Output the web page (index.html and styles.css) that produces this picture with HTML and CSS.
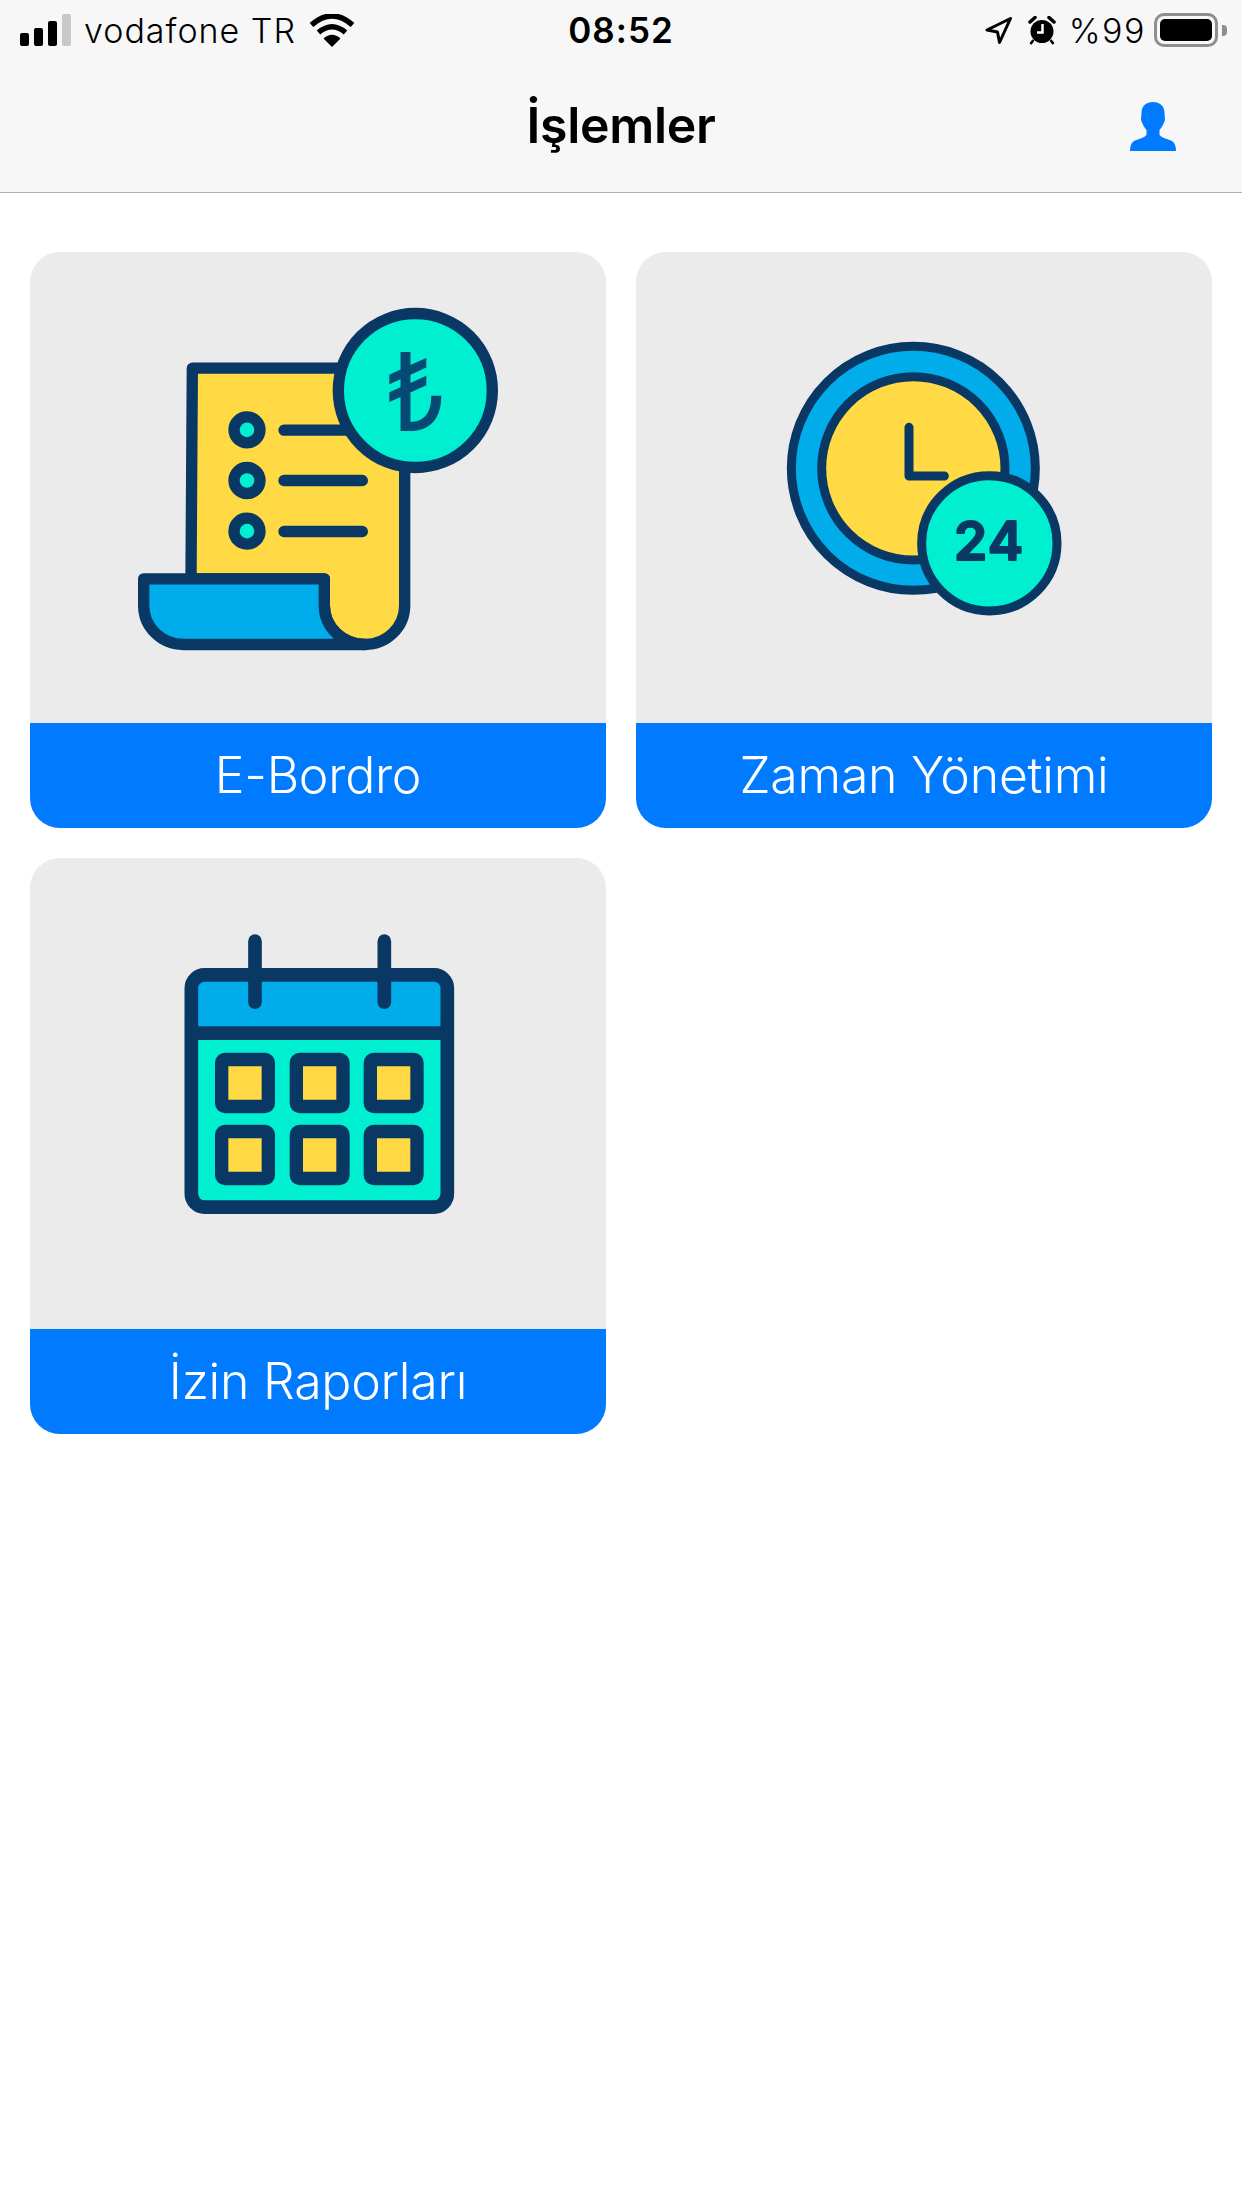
FILE: index.html
```html
<!DOCTYPE html>
<html lang="tr">

<head>
  <meta charset="UTF-8">
  <meta name="viewport" content="width=device-width, initial-scale=1.0">
  <title>İşlemler</title>
  <link rel="stylesheet" href="styles.css">
</head>

<body>

  <header class="top-bar">
    <div class="status-bar">
      <div class="status-left">
        <div class="signal">
          <span class="bar bar-1"></span>
          <span class="bar bar-2"></span>
          <span class="bar bar-3"></span>
          <span class="bar bar-4"></span>
        </div>
        <span class="carrier">vodafone TR</span>
        <svg class="wifi" width="46" height="33" viewBox="0 0 46 33">
          <path d="M2.5 11Q23-7 43.5 11" fill="none" stroke="#000" stroke-width="5.5" />
          <path d="M9.5 18.500Q23 7 36.500 18.500" fill="none" stroke="#000" stroke-width="5.500" />
          <path d="M23 33L14.500 24.500Q23 17 31.500 24.500Z" fill="#000" />
        </svg>
      </div>
      <span class="time">08:52</span>
      <div class="status-right">
        <svg class="location" width="27" height="27" viewBox="0 0 27 27">
          <path d="M25.500 1.500L2 13L12.500 15L14.500 25.500Z" fill="none" stroke="#000" stroke-width="3" stroke-linejoin="round" />
        </svg>
        <svg class="alarm" width="28" height="29" viewBox="0 0 28 29">
          <circle cx="14" cy="15.500" r="11.500" fill="#000" />
          <path d="M14.500 8V16.500H9" fill="none" stroke="#fff" stroke-width="2.500" />
          <path d="M2 6L7 1.500M26 6L21 1.500" stroke="#000" stroke-width="3.500" stroke-linecap="round" />
          <path d="M5.500 24L2.500 28M22.500 24L25.500 28" stroke="#000" stroke-width="2.500" />
        </svg>
        <span class="battery-text">%99</span>
        <div class="battery">
          <div class="battery-level"></div>
        </div>
        <span class="battery-nub"></span>
      </div>
    </div>

    <nav class="nav-bar">
      <span></span>
      <h1>İşlemler</h1>
      <svg class="profile" width="46" height="49" viewBox="0 0 46 49">
        <path d="M23 0C30 0 34.500 4 34.500 11C34.500 14 35.500 17 34.500 19.500C33 23 31.500 26 29.500 28V33C32 36 38 37 42 39C45 41 46 45 46 49H0C0 45 1 41 4 39C8 37 14 36 16.500 33V28C14.500 26 13 23 11.500 19.500C10.500 17 11.500 14 11.500 11C11.500 4 16 0 23 0Z" fill="#007aff" />
      </svg>
    </nav>
  </header>

  <main class="menu-grid">

    <a class="menu-card">
      <div class="menu-icon">
        <svg width="420" height="420" viewBox="0 0 420 420">
          <g transform="translate(2 2.500) scale(.33333)" stroke="#083863" stroke-width="34" stroke-linejoin="round" stroke-linecap="round">
            <path d="M247 263L243 895H643V975A122 117 0 0 0 765 1092A119 117 0 0 0 884 975V263Z" fill="#ffda44" />
            <path d="M101 895H643V975A122 117 0 0 0 765 1092H220A119 117 0 0 1 101 975Z" fill="#00acea" />
            <circle cx="411" cy="448" r="39" fill="#00efd1" />
            <circle cx="411" cy="600" r="39" fill="#00efd1" />
            <circle cx="411" cy="752" r="39" fill="#00efd1" />
            <path d="M522 449H740M522 600H757M522 753H757" fill="none" />
            <circle cx="916" cy="330" r="231" fill="#00efd1" />
            <text class="lira" x="918" y="450" text-anchor="middle" stroke="none">₺</text>
          </g>
        </svg>
      </div>
      <div class="menu-label">E-Bordro</div>
    </a>

    <a class="menu-card">
      <div class="menu-icon">
        <svg width="420" height="420" viewBox="0 0 420 420">
          <g transform="translate(36 32) scale(.33333)" stroke="#083863" stroke-width="27" stroke-linejoin="round" stroke-linecap="round">
            <circle cx="490" cy="475" r="366" fill="#00acea" />
            <circle cx="490" cy="475" r="275" fill="#ffda44" />
            <path d="M477 352V498H583" fill="none" />
            <circle cx="718" cy="700" r="203" fill="#00efd1" />
            <text class="hours" x="718" y="750" text-anchor="middle" stroke-width="6">24</text>
          </g>
        </svg>
      </div>
      <div class="menu-label">Zaman Yönetimi</div>
    </a>

    <a class="menu-card">
      <div class="menu-icon">
        <svg width="420" height="420" viewBox="0 0 420 420">
          <g transform="translate(52 26.500) scale(.33333)" stroke="#083863" stroke-width="41" stroke-linejoin="round" stroke-linecap="round">
            <rect x="94" y="193" width="768" height="697" rx="40" fill="#00efd1" stroke="none" />
            <path d="M94 368V233A40 40 0 0 1 134 193H822A40 40 0 0 1 862 233V368Z" fill="#00acea" stroke="none" />
            <path d="M94 368H862" fill="none" stroke-linecap="butt" />
            <rect x="94" y="193" width="768" height="697" rx="40" fill="none" />
            <path d="M285 92V275M673 92V275" fill="none" />
            <g fill="#ffda44" stroke-width="40">
              <rect x="185" y="447" width="140" height="141" rx="10" />
              <rect x="409" y="447" width="140" height="141" rx="10" />
              <rect x="631" y="447" width="140" height="141" rx="10" />
              <rect x="185" y="663" width="140" height="141" rx="10" />
              <rect x="409" y="663" width="140" height="141" rx="10" />
              <rect x="631" y="663" width="140" height="141" rx="10" />
            </g>
          </g>
        </svg>
      </div>
      <div class="menu-label">İzin Raporları</div>
    </a>

  </main>

</body>

</html>
```

FILE: styles.css
```css
html,
body {
  margin: 0;
  padding: 0;
  background-color: #ffffff;
}

body {
  font-family: Inter, "Noto Sans", sans-serif;
  color: #000000;
  min-height: 2208px;
}

.top-bar {
  background-color: #f7f7f7;
  border-bottom: 1px solid #b2b2b2;
  height: 192px;
}

.status-bar {
  height: 60px;
  display: flex;
  align-items: center;
  justify-content: space-between;
  padding: 0 15px;
}

.status-left,
.status-right {
  flex: 1;
  display: flex;
  align-items: center;
}

.status-right {
  justify-content: flex-end;
}

.signal {
  display: flex;
  align-items: flex-end;
  gap: 5px;
  height: 32px;
  margin-left: 5px;
}

.bar {
  width: 9px;
  background-color: #000000;
  border-radius: 2px;
}

.bar-1 {
  height: 13px;
}

.bar-2 {
  height: 18px;
}

.bar-3 {
  height: 25px;
}

.bar-4 {
  height: 32px;
  background-color: #c8c8c8;
}

.carrier {
  font-size: 34px;
  font-weight: 300;
  letter-spacing: 1px;
  margin-left: 13px;
}

.wifi {
  margin-left: 13px;
}

.time {
  font-size: 35px;
  font-weight: 600;
  letter-spacing: 1px;
}

.alarm {
  margin-left: 16px;
}

.battery-text {
  font-size: 34px;
  font-weight: 300;
  letter-spacing: 1.5px;
  margin-left: 13px;
}

.battery {
  width: 64px;
  height: 34px;
  box-sizing: border-box;
  border: 3px solid #8e8e8e;
  border-radius: 10px;
  padding: 3px;
  margin-left: 8px;
}

.battery-level {
  height: 100%;
  background-color: #000000;
  border-radius: 5px;
}

.battery-nub {
  width: 5px;
  height: 11px;
  background-color: #8e8e8e;
  border-radius: 0 4px 4px 0;
  margin-left: 4px;
}

.nav-bar {
  height: 130px;
  padding: 0 66px 2px;
  display: grid;
  grid-template-columns: 1fr auto 1fr;
  align-items: center;
}

.nav-bar h1 {
  font-size: 50px;
  font-weight: 600;
  letter-spacing: -0.3px;
  margin: 0;
}

.profile {
  justify-self: end;
  margin-top: 2px;
}

.menu-grid {
  display: grid;
  grid-template-columns: 576px 576px;
  gap: 30px;
  padding: 59px 30px 0;
}

.menu-card {
  display: block;
  height: 576px;
  border-radius: 30px;
  overflow: hidden;
  background-color: #ebebeb;
}

.menu-icon {
  height: 471px;
  display: flex;
  align-items: center;
  justify-content: center;
}

.menu-label {
  height: 105px;
  line-height: 105px;
  background-color: #007aff;
  color: #ffffff;
  font-size: 50px;
  font-weight: 300;
  letter-spacing: -0.25px;
  text-align: center;
}

.lira {
  font-family: Inter, sans-serif;
  font-size: 320px;
  font-weight: 400;
  fill: #054a74;
}

.hours {
  font-family: Inter, sans-serif;
  font-size: 160px;
  font-weight: 600;
  letter-spacing: 4px;
  fill: #083863;
}
```
